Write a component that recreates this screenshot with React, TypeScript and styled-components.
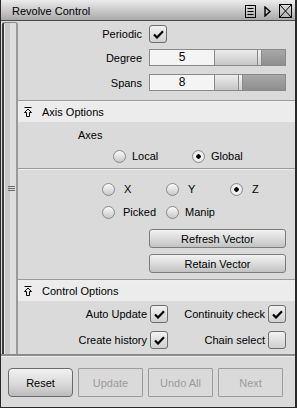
import React from 'react';
import styled, { createGlobalStyle } from 'styled-components';

const GlobalStyle = createGlobalStyle`
  html, body {
    margin: 0;
    padding: 0;
    background: #dadada;
  }
  body {
    font-family: 'Liberation Sans', Arial, sans-serif;
    font-size: 11px;
    color: #000;
  }
`;

const CheckMark = () => (
  <svg width="11" height="9" viewBox="0 0 11 9">
    <path d="M1 4.5 L4 7.5 L10 1.2" fill="none" stroke="#000" strokeWidth="2.2" />
  </svg>
);

const CollapseIcon = () => (
  <svg width="8" height="10" viewBox="0 0 8 10">
    <path d="M0.5 0.5 H7.5" stroke="#000" strokeWidth="1" />
    <path d="M4 2 L7.5 5.5 H5.5 V9.5 H2.5 V5.5 H0.5 Z" fill="none" stroke="#000" strokeWidth="1" />
  </svg>
);

const MenuIcon = () => (
  <svg width="11" height="13" viewBox="0 0 11 13">
    <rect x="0.5" y="0.5" width="10" height="12" fill="none" stroke="#000" />
    <path d="M2.5 3.5 H8.5 M2.5 6.5 H8.5 M2.5 9.5 H8.5" stroke="#000" />
  </svg>
);

const PlayIcon = () => (
  <svg width="7" height="11" viewBox="0 0 7 11">
    <path d="M1 1 L6 5.5 L1 10 Z" fill="none" stroke="#000" strokeWidth="1.4" />
  </svg>
);

const CloseIcon = () => (
  <svg width="13" height="14" viewBox="0 0 13 14">
    <rect x="0.5" y="0.5" width="12" height="13" fill="none" stroke="#000" />
    <path d="M1 1 L12 13 M12 1 L1 13" stroke="#000" />
  </svg>
);

const GripIcon = () => (
  <svg width="7" height="7" viewBox="0 0 7 7">
    <path d="M0 1.5 H7 M0 3.5 H7 M0 5.5 H7" stroke="#6a6a6a" />
  </svg>
);

function Checkbox({ checked }: { checked: boolean }) {
  return <Box>{checked && <CheckMark />}</Box>;
}

function Radio({ on, label, gap }: { on: boolean; label: string; gap?: number }) {
  return (
    <RadioItem $gap={gap ?? 6}>
      <RadioDot $on={on} />
      <span>{label}</span>
    </RadioItem>
  );
}

function Slider({ value, fill }: { value: number; fill: number }) {
  return (
    <SliderRow>
      <Field>{value}</Field>
      <Track>
        <TrackFill style={{ width: `${fill}px` }} />
        <Thumb />
        <TrackRest />
      </Track>
    </SliderRow>
  );
}

export default function App() {
  return (
    <>
      <GlobalStyle />
      <Window>
        <TitleBar>
          <Title>Revolve Control</Title>
          <TitleIcons>
            <MenuIcon />
            <PlayIcon />
            <CloseIcon />
          </TitleIcons>
        </TitleBar>

        <Body>
          <Strip>
            <GripIcon />
          </Strip>
          <Content>
            <TopSection>
              <FormRow $h={18}>
                <Label>Periodic</Label>
                <Checkbox checked />
              </FormRow>
              <FormRow $h={17} $mt={6}>
                <Label>Degree</Label>
                <Slider value={5} fill={42} />
              </FormRow>
              <FormRow $h={17} $mt={8}>
                <Label>Spans</Label>
                <Slider value={8} fill={23} />
              </FormRow>
            </TopSection>

            <Separator />
            <SectionHeader>
              <CollapseIcon />
              <span>Axis Options</span>
            </SectionHeader>

            <AxesBlock>
              <AxesLabel>Axes</AxesLabel>
              <RadioLine $left={95} $col={79} $mt={7}>
                <Radio on={false} label="Local" />
                <Radio on label="Global" />
              </RadioLine>
            </AxesBlock>

            <Separator />

            <VectorBlock>
              <RadioLine $left={84} $col={64}>
                <Radio on={false} label="X" gap={9} />
                <Radio on={false} label="Y" gap={9} />
                <Radio on label="Z" gap={9} />
              </RadioLine>
              <RadioLine $left={84} $col={64} $mt={9}>
                <Radio on={false} label="Picked" gap={8} />
                <Radio on={false} label="Manip" />
              </RadioLine>
              <WideButton $mt={10}>Refresh Vector</WideButton>
              <WideButton $mt={6}>Retain Vector</WideButton>
            </VectorBlock>

            <Separator />
            <SectionHeader>
              <CollapseIcon />
              <span>Control Options</span>
            </SectionHeader>

            <OptionsGrid>
              <OptionCell>
                Auto Update
                <Checkbox checked />
              </OptionCell>
              <OptionCell>
                Continuity check
                <Checkbox checked />
              </OptionCell>
              <OptionCell>
                Create history
                <Checkbox checked />
              </OptionCell>
              <OptionCell>
                Chain select
                <Checkbox checked={false} />
              </OptionCell>
            </OptionsGrid>
          </Content>
        </Body>

        <Footer>
          <ActionButton>Reset</ActionButton>
          <ActionButton disabled>Update</ActionButton>
          <ActionButton disabled>Undo All</ActionButton>
          <ActionButton disabled>Next</ActionButton>
        </Footer>
      </Window>
    </>
  );
}

const Window = styled.div`
  width: 297px;
  height: 408px;
  box-sizing: border-box;
  display: flex;
  flex-direction: column;
  background: #dadada;
  border-left: 1px solid #2a2a2a;
  border-right: 2px solid #2a2a2a;
  border-bottom: 1px solid #2a2a2a;
  overflow: hidden;
`;

const TitleBar = styled.div`
  height: 20px;
  flex: none;
  display: flex;
  align-items: center;
  justify-content: space-between;
  padding: 0 3px 0 11px;
  background: linear-gradient(to bottom, #ececec, #c4c4c4 60%, #a9a9a9);
  border-bottom: 1px solid #4a4a4a;
`;

const Title = styled.div`
  font-size: 11px;
  padding-top: 1px;
`;

const TitleIcons = styled.div`
  display: flex;
  align-items: center;
  gap: 8px;
  padding-top: 2px;
`;

const Body = styled.div`
  height: 333px;
  flex: none;
  display: flex;
  padding-left: 1px;
  border-bottom: 2px solid #8c8c8c;
`;

const Strip = styled.div`
  width: 14px;
  flex: none;
  margin-top: 1px;
  display: flex;
  align-items: center;
  justify-content: center;
  border-left: 2px solid #3c3c3c;
  border-top: 1px solid #8a8a8a;
  border-radius: 3px 3px 0 0;
  background: linear-gradient(to right, #e8e8e8 0 1px, #c8c8c8 1px 6px, #dedede 6px 12px, #9a9a9a 12px);
`;

const Content = styled.div`
  flex: 1;
  display: flex;
  flex-direction: column;
  padding-right: 1px;
`;

const TopSection = styled.div`
  padding-top: 4px;
  height: 75px;
  flex: none;
`;

const FormRow = styled.div<{ $h: number; $mt?: number }>`
  display: flex;
  align-items: center;
  height: ${(p) => p.$h}px;
  margin-top: ${(p) => p.$mt ?? 0}px;
`;

const Label = styled.div`
  width: 124px;
  text-align: right;
  margin-right: 7px;
`;

const Box = styled.div`
  width: 16px;
  height: 16px;
  border: 1px solid #6e6e6e;
  border-radius: 3px;
  background: linear-gradient(to bottom, #f2f2f2, #cfcfcf);
  display: flex;
  align-items: center;
  justify-content: center;
  flex: none;
`;

const SliderRow = styled.div`
  display: flex;
  height: 17px;
`;

const Field = styled.div`
  width: 66px;
  box-sizing: border-box;
  height: 17px;
  line-height: 15px;
  text-align: center;
  font-size: 12px;
  background: #f4f4f4;
  border: 1px solid #8a8a8a;
`;

const Track = styled.div`
  width: 71px;
  height: 17px;
  box-sizing: border-box;
  display: flex;
  border: 1px solid #8a8a8a;
  border-left: none;
`;

const TrackFill = styled.div`
  background: linear-gradient(to bottom, #ececec, #c6c6c6);
`;

const Thumb = styled.div`
  width: 3px;
  border: 1px solid #8a8a8a;
  border-top: none;
  border-bottom: none;
  background: linear-gradient(to bottom, #f4f4f4, #d0d0d0);
`;

const TrackRest = styled.div`
  flex: 1;
  background: linear-gradient(to bottom, #a8a8a8, #8e8e8e);
`;

const Separator = styled.div`
  height: 1px;
  background: #9a9a9a;
  border-bottom: 1px solid #eeeeee;
  flex: none;
`;

const SectionHeader = styled.div`
  height: 20px;
  flex: none;
  display: flex;
  align-items: center;
  gap: 10px;
  padding-left: 6px;
  background: #ececec;
`;

const AxesBlock = styled.div`
  height: 46px;
  flex: none;
  padding-top: 6px;
  box-sizing: border-box;
`;

const AxesLabel = styled.div`
  padding-left: 60px;
  height: 14px;
  line-height: 14px;
`;

const RadioLine = styled.div<{ $left: number; $col: number; $mt?: number }>`
  display: grid;
  grid-template-columns: repeat(3, ${(p) => p.$col}px);
  padding-left: ${(p) => p.$left}px;
  margin-top: ${(p) => p.$mt ?? 0}px;
  height: 14px;
  align-items: center;
  flex: none;
`;

const RadioItem = styled.div<{ $gap: number }>`
  display: flex;
  align-items: center;
  gap: ${(p) => p.$gap}px;
`;

const RadioDot = styled.div<{ $on: boolean }>`
  width: 11px;
  height: 11px;
  border-radius: 50%;
  border: 1px solid #8a8a8a;
  background: ${(p) =>
    p.$on
      ? 'radial-gradient(circle, #000 0 2px, #f4f4f4 2.5px, #dcdcdc)'
      : 'linear-gradient(to bottom, #fafafa, #c8c8c8)'};
  flex: none;
`;

const VectorBlock = styled.div`
  height: 109px;
  flex: none;
  padding-top: 12px;
  box-sizing: border-box;
  display: flex;
  flex-direction: column;
`;

const WideButton = styled.button<{ $mt?: number }>`
  margin: ${(p) => p.$mt ?? 0}px 0 0 131px;
  width: 137px;
  height: 19px;
  flex: none;
  padding: 0;
  font-family: inherit;
  font-size: 11px;
  color: #000;
  border: 1px solid #7c7c7c;
  border-radius: 3px;
  background: linear-gradient(to bottom, #f2f2f2, #d6d6d6 60%, #c2c2c2);
`;

const OptionsGrid = styled.div`
  display: grid;
  grid-template-columns: 150px 118px;
  row-gap: 8px;
  padding-top: 4px;
`;

const OptionCell = styled.div`
  display: flex;
  align-items: center;
  justify-content: flex-end;
  gap: 3px;
`;

const Footer = styled.div`
  flex: 1;
  display: flex;
  gap: 5px;
  padding: 11px 0 0 7px;
  border-top: 1px solid #eeeeee;
`;

const ActionButton = styled.button`
  width: 65px;
  height: 29px;
  padding: 0;
  font-family: inherit;
  font-size: 11px;
  color: #000;
  border: 1px solid #6a6a6a;
  border-radius: 4px;
  background: linear-gradient(to bottom, #f2f2f2, #dadada 55%, #bcbcbc);

  &:disabled {
    color: #9a9a9a;
    border-color: #9c9c9c;
    border-radius: 1px;
    background: #dadada;
  }
`;
